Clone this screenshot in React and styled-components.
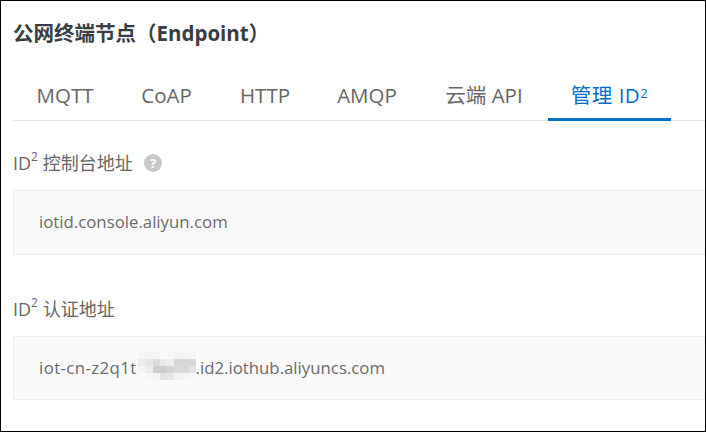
import React from 'react';
import styled, { createGlobalStyle } from 'styled-components';

const Global = createGlobalStyle`
  html, body {
    margin: 0;
    padding: 0;
    background: #fff;
  }
  * {
    box-sizing: border-box;
  }
`;

const Page = styled.div`
  width: 706px;
  height: 432px;
  overflow: hidden;
  border: 1px solid #000;
  padding: 0 0 0 12px;
  font-family: 'Open Sans', 'Noto Sans CJK SC', sans-serif;
  color: #555;
`;

const Title = styled.h2`
  margin: 0;
  padding-top: 19px;
  height: 51px;
  font-size: 20.5px;
  line-height: 27px;
  font-weight: 700;
  color: #373d41;
`;

const Tabs = styled.ul`
  display: flex;
  margin: 0;
  padding: 0;
  height: 69px;
  list-style: none;
  border-bottom: 1px solid #e1e1e1;
`;

const Tab = styled.li`
  display: flex;
  align-items: center;
  justify-content: center;
  margin-bottom: -1px;
  width: ${(props) => props.w}px;
  padding-top: 20px;
  font-size: 20.5px;
  line-height: 26px;
  white-space: pre;
  letter-spacing: ${(props) => (props.active ? '0.5px' : '0')};
  color: ${(props) => (props.active ? '#0070cc' : '#666')};
  border-bottom: 3px solid ${(props) => (props.active ? '#0070cc' : 'transparent')};
`;

const Sup = styled.sup`
  font-size: ${(props) => props.size || 12}px;
  line-height: 0;
  position: relative;
  top: -2px;
  vertical-align: super;
`;

const Field = styled.section`
  padding-top: ${(props) => props.top}px;
`;

const Label = styled.div`
  display: flex;
  align-items: center;
  gap: 11px;
  height: 28px;
  margin-bottom: 13px;
  font-size: 18px;
  line-height: 28px;
  color: #666;
`;

const Value = styled.div`
  display: flex;
  align-items: center;
  height: ${(props) => props.h}px;
  padding: 0 0 2px 25px;
  font-size: 16.8px;
  color: #6b6b6b;
  background: #fafafa;
  border: 1px solid #ececec;
  border-right: 0;
`;

const Prefix = styled.span`
  letter-spacing: 0.4px;
`;

const MosaicSvg = styled.svg`
  margin: 0 0 2px 1px;
`;

const Help = () => (
  <svg width="18" height="18" viewBox="0 0 18 18">
    <circle cx="9" cy="9" r="9" fill="#c9c9c9" />
    <text x="9" y="13.5" textAnchor="middle" fontSize="13" fontWeight="700" fontFamily="Open Sans" fill="#fff">?</text>
  </svg>
);

const cells = [
  '#f7f7f7 #f4f4f4 #f4f4f4 #fbfbfb #f7f7f7 #f3f3f3 #f4f4f4 #f6f6f6',
  '#ececec #e6e6e6 #dcdcdc #ebebeb #efefef #d6d6d6 #d8d8d8 #d8d8d8',
  '#f5f5f5 #eeeeee #cfcfcf #cdcdcd #d5d5d5 #dadada #d8d8d8 #e2e2e2',
  '#fafafa #f8f8f8 #f5f5f5 #e4e4e4 #e6e6e6 #f3f3f3 #f5f5f5 #f7f7f7',
];

const Mosaic = () => (
  <MosaicSvg width="58" height="28" viewBox="0 0 58 28" shapeRendering="crispEdges">
    {cells.map((row, y) =>
      row.split(' ').map((fill, x) => (
        <rect key={`${x}-${y}`} x={x * 7.25} y={y * 7} width="7.25" height="7" fill={fill} />
      ))
    )}
  </MosaicSvg>
);

const tabs = [
  { name: 'MQTT', w: 104 },
  { name: 'CoAP', w: 99 },
  { name: 'HTTP', w: 98 },
  { name: 'AMQP', w: 106 },
  { name: '云端 API', w: 128 },
];

export default function App() {
  return (
    <>
      <Global />
      <Page>
        <Title>公网终端节点（Endpoint）</Title>
        <Tabs>
          {tabs.map((tab) => (
            <Tab key={tab.name} w={tab.w}>{tab.name}</Tab>
          ))}
          <Tab active w={123}>管理 ID<Sup size={13}>2</Sup></Tab>
        </Tabs>
        <Field top={28}>
          <Label>
            <span>ID<Sup>2</Sup> 控制台地址</span>
            <Help />
          </Label>
          <Value h={65}>iotid.console.aliyun.com</Value>
        </Field>
        <Field top={40}>
          <Label>
            <span>ID<Sup>2</Sup> 认证地址</span>
          </Label>
          <Value h={64}><Prefix>iot-cn-z2q1t</Prefix><Mosaic />.id2.iothub.aliyuncs.com</Value>
        </Field>
      </Page>
    </>
  );
}
